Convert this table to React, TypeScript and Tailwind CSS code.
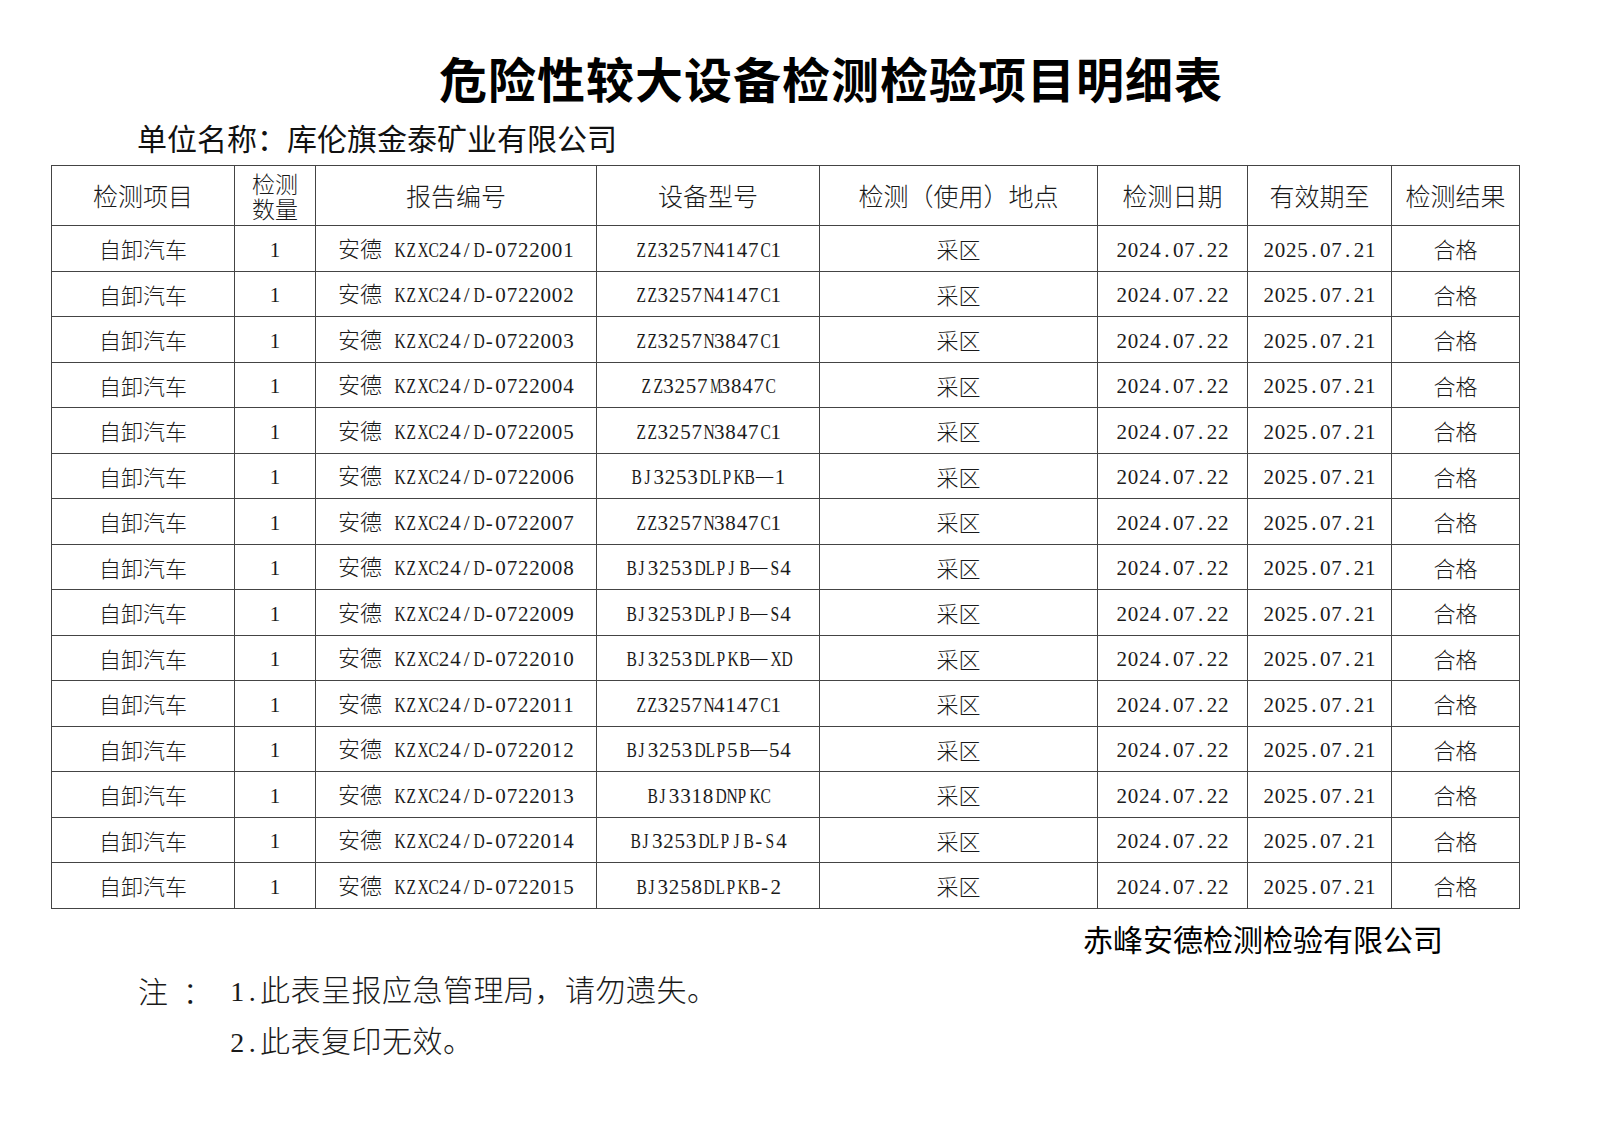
const rows = [
  ['0722001', 'ZZ3257N4147C1'],
  ['0722002', 'ZZ3257N4147C1'],
  ['0722003', 'ZZ3257N3847C1'],
  ['0722004', 'ZZ3257M3847C'],
  ['0722005', 'ZZ3257N3847C1'],
  ['0722006', 'BJ3253DLPKB—1'],
  ['0722007', 'ZZ3257N3847C1'],
  ['0722008', 'BJ3253DLPJB—S4'],
  ['0722009', 'BJ3253DLPJB—S4'],
  ['0722010', 'BJ3253DLPKB—XD'],
  ['0722011', 'ZZ3257N4147C1'],
  ['0722012', 'BJ3253DLP5B—54'],
  ['0722013', 'BJ3318DNPKC'],
  ['0722014', 'BJ3253DLPJB-S4'],
  ['0722015', 'BJ3258DLPKB-2'],
];

// half-width latin like the song font in the scan: every char gets the same box,
// capitals squeezed a bit so they fit
function squeeze(ch: string) {
  if (ch === 'M' || ch === 'W') return 'scale-x-[0.6]';
  if (/[A-Z]/.test(ch)) return 'scale-x-[0.74]';
  return '';
}

function Latin({ text, note }: { text: string; note?: boolean }) {
  return (
    <span className={note ? "font-['Liberation_Serif',serif] text-[28px]" : "font-['Liberation_Serif',serif] text-[21px]"}>
      {text.split('').map((ch, i) => (
        <span
          key={i}
          className={(note ? 'inline-block w-[15px] text-center ' : 'inline-block w-[11.3px] text-center ') + squeeze(ch)}
        >
          {ch === ' ' ? '\u00a0' : ch}
        </span>
      ))}
    </span>
  );
}

function Mixed({ text, note }: { text: string; note?: boolean }) {
  const parts = text.match(/[\x00-\x7f]+|[^\x00-\x7f]+/g) || [];
  return (
    <>
      {parts.map((p, i) =>
        /^[\x00-\x7f]/.test(p) ? <Latin key={i} text={p} note={note} /> : <span key={i}>{p}</span>
      )}
    </>
  );
}

const th = "border border-[#444] text-center font-light text-[25px] text-[#1a1a1a] p-0";
const td = "border border-[#444] text-center text-[#1a1a1a] text-[22px] leading-[22px] font-light p-0 whitespace-nowrap";

export default function App() {
  return (
    <div className="w-[1600px] h-[1131px] bg-white text-black font-['Noto_Sans_CJK_SC',sans-serif]">
      <h1 className="pt-[53px] pl-[62px] text-center font-bold text-[48px] leading-[48px] tracking-[1px]">
        危险性较大设备检测检验项目明细表
      </h1>

      <div className="mt-[20px] pl-[137px] text-[30px] leading-[32px] text-[#111]">
        单位名称：库伦旗金泰矿业有限公司
      </div>

      <table className="mt-[12px] ml-[51px] w-[1468px] table-fixed border-collapse">
        <colgroup>
          <col className="w-[183px]" />
          <col className="w-[81px]" />
          <col className="w-[281px]" />
          <col className="w-[223px]" />
          <col className="w-[278px]" />
          <col className="w-[150px]" />
          <col className="w-[144px]" />
          <col className="w-[128px]" />
        </colgroup>
        <thead>
          <tr className="h-[60px]">
            <th className={th}>检测项目</th>
            <th className={th}>
              <div className="text-[23px] leading-[25px]">检测<br />数量</div>
            </th>
            <th className={th}>报告编号</th>
            <th className={th}>设备型号</th>
            <th className={th}>检测（使用）地点</th>
            <th className={th}>检测日期</th>
            <th className={th}>有效期至</th>
            <th className={th}>检测结果</th>
          </tr>
        </thead>
        <tbody>
          {rows.map(([no, model]) => (
            <tr key={no} className="h-[45.5px]">
              <td className={td}>自卸汽车</td>
              <td className={td}><Latin text="1" /></td>
              <td className={td}><Mixed text={`安德 KZXC24/D-${no}`} /></td>
              <td className={td}><Mixed text={model} /></td>
              <td className={td}>采区</td>
              <td className={td}><Latin text="2024.07.22" /></td>
              <td className={td}><Latin text="2025.07.21" /></td>
              <td className={td}>合格</td>
            </tr>
          ))}
        </tbody>
      </table>

      <div className="mt-[14px] flex justify-end pr-[157px] text-[30px] leading-[30px]">
        赤峰安德检测检验有限公司
      </div>

      <div className="mt-[22px] pl-[138px] font-light text-[30px] tracking-[0.5px] text-[#1a1a1a]">
        <div className="flex h-[30px] items-center leading-[30px]">
          <span className="w-[92px] whitespace-pre">注  ：</span>
          <span><Mixed text="1.此表呈报应急管理局，请勿遗失。" note /></span>
        </div>
        <div className="mt-[21px] flex h-[30px] items-center leading-[30px]">
          <span className="w-[92px]" />
          <span><Mixed text="2.此表复印无效。" note /></span>
        </div>
      </div>
    </div>
  );
}
